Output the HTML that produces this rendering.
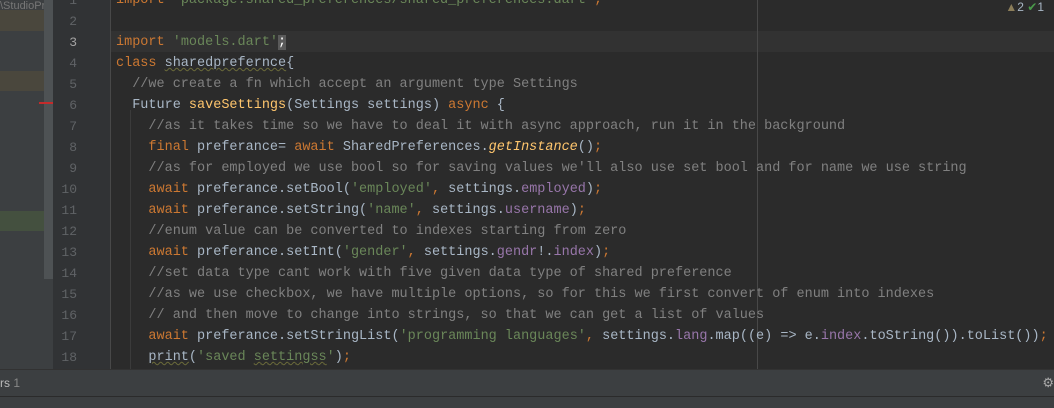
<!DOCTYPE html>
<html><head><meta charset="utf-8"><style>
body{margin:0;width:1054px;height:407px;overflow:hidden;background:#2b2b2b;position:relative;font-family:"Liberation Mono",monospace;}
.left{position:absolute;left:0;top:0;width:53px;height:369px;background:#3c3f41;overflow:hidden}
.gut{position:absolute;left:53px;top:0;width:57px;height:369px;background:#313335}
.ln{position:absolute;left:53px;width:24px;text-align:right;font-size:13px;color:#606366;line-height:21px}
.code{position:absolute;left:116px;top:-10px;font-size:13.5px;line-height:21px;color:#a9b7c6;white-space:pre}
.k{color:#cc7832}.s{color:#6a8759}.c{color:#808080}.f{color:#ffc66d}.p{color:#9876aa}.i{font-style:italic;color:#ffc66d}
.u{text-decoration:underline wavy #6b6b3a;text-decoration-thickness:1px}
</style></head><body>
<div class="left">
<div style="position:absolute;left:0;top:0;color:#777;font:11px 'Liberation Sans',sans-serif;">\StudioPr</div>
<div style="position:absolute;left:0;top:10px;width:53px;height:21px;background:#4a473d"></div>
<div style="position:absolute;left:0;top:71px;width:53px;height:20px;background:#4a473d"></div>
<div style="position:absolute;left:0;top:211px;width:53px;height:20px;background:#44503f"></div>
<div style="position:absolute;left:44px;top:0;width:9px;height:279px;background:#4e5254"></div>
<div style="position:absolute;left:39px;top:102px;width:14px;height:2px;background:#c42b2b"></div>
</div>
<div class="gut"></div>
<div style="position:absolute;left:110px;top:31px;width:944px;height:21px;background:#323232"></div>
<div style="position:absolute;left:110px;top:0;width:1px;height:369px;background:#484848"></div>
<div style="position:absolute;left:130px;top:110px;width:1px;height:259px;background:#3b3b3b"></div>
<div style="position:absolute;left:757px;top:0;width:1px;height:369px;background:#484848"></div>
<div id="lns"></div>
<div class="code"><span class="k">import </span><span class="s">'package:shared_preferences/shared_preferences.dart'</span><span class="k">;</span>

<span class="k">import </span><span class="s">'models.dart'</span><span style="background:#5a5a5a;color:#fff">;</span>
<span class="k">class </span><span class="u">sharedprefernce</span>{
  <span class="c">//we create a fn which accept an argument type Settings</span>
  Future <span class="f">saveSettings</span>(Settings settings) <span class="k">async </span>{
    <span class="c">//as it takes time so we have to deal it with async approach, run it in the background</span>
    <span class="k">final </span>preferance= <span class="k">await </span>SharedPreferences.<span class="i">getInstance</span>()<span class="k">;</span>
    <span class="c">//as for employed we use bool so for saving values we'll also use set bool and for name we use string</span>
    <span class="k">await </span>preferance.setBool(<span class="s">'employed'</span><span class="k">, </span>settings.<span class="p">employed</span>)<span class="k">;</span>
    <span class="k">await </span>preferance.setString(<span class="s">'name'</span><span class="k">, </span>settings.<span class="p">username</span>)<span class="k">;</span>
    <span class="c">//enum value can be converted to indexes starting from zero</span>
    <span class="k">await </span>preferance.setInt(<span class="s">'gender'</span><span class="k">, </span>settings.<span class="p">gendr</span>!.<span class="p">index</span>)<span class="k">;</span>
    <span class="c">//set data type cant work with five given data type of shared preference</span>
    <span class="c">//as we use checkbox, we have multiple options, so for this we first convert of enum into indexes</span>
    <span class="c">// and then move to change into strings, so that we can get a list of values</span>
    <span class="k">await </span>preferance.setStringList(<span class="s">'programming languages'</span><span class="k">, </span>settings.<span class="p">lang</span>.map((e) => e.<span class="p">index</span>.toString()).toList())<span class="k">;</span>
    <span class="u">print</span>(<span class="s">'saved <span class="u">settingss</span>'</span>)<span class="k">;</span></div>
<div style="position:absolute;right:10px;top:0;font:12px 'Liberation Sans',sans-serif;color:#a9b7c6;"><span style="color:#8c7e5a">▲</span>2 <span style="color:#4a9a4a">✔</span>1</div>
<div style="position:absolute;left:0;top:369px;width:1054px;height:27px;background:#3c3f41;border-top:1px solid #323232"></div>
<div style="position:absolute;left:0;top:376px;font:12px 'Liberation Sans',sans-serif;color:#bbb">rs <span style="color:#888">1</span></div>
<div style="position:absolute;right:0;top:376px;color:#aaa;font-size:13px">⚙</div>
<div style="position:absolute;left:0;top:396px;width:1054px;height:11px;background:#3c3f41;border-top:1px solid #2b2b2b"></div>
<script>
var h='';for(var n=1;n<=18;n++){var t=(n-1)*21-10;h+='<div class="ln" style="top:'+t+'px;'+(n==3?'color:#a4a3a3':'')+'">'+n+'</div>';}
document.getElementById('lns').innerHTML=h;
</script>
</body></html>
